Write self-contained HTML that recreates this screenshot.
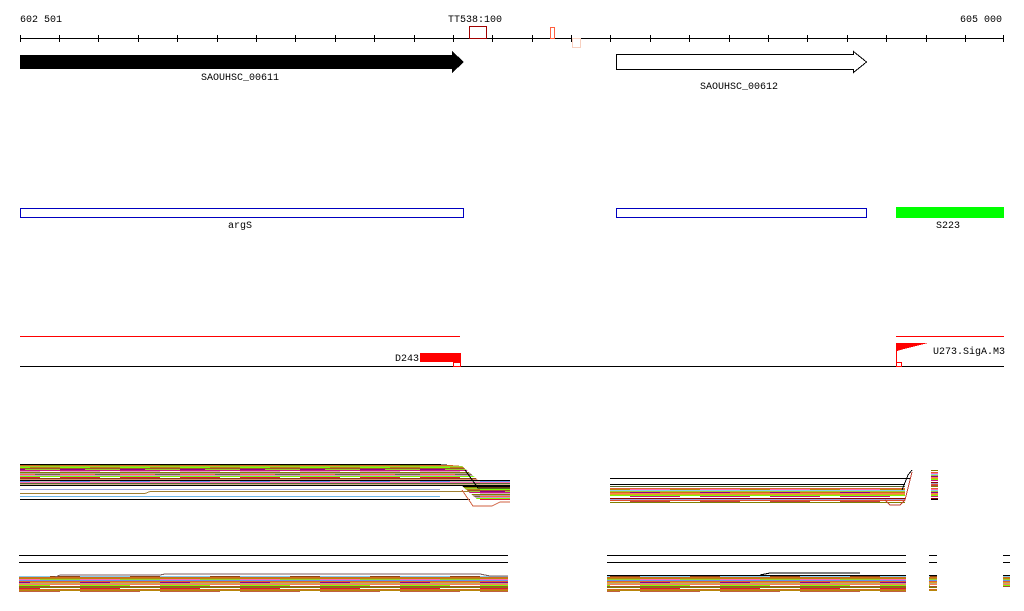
<!DOCTYPE html>
<html><head><meta charset="utf-8"><style>
html,body{margin:0;padding:0;background:#fff;width:1024px;height:611px;overflow:hidden}
svg text{font-family:"Liberation Mono","DejaVu Sans Mono",monospace;font-size:10px;fill:#000}
</style></head><body>
<svg width="1024" height="611" viewBox="0 0 1024 611" xmlns="http://www.w3.org/2000/svg" shape-rendering="crispEdges">
<defs>
<pattern id="s1" x="0" y="464" width="60" height="22" patternUnits="userSpaceOnUse">
<rect width="60" height="22" fill="#fff"/>
<rect y="0" width="60" height="1" fill="#000"/>
<rect y="1" width="40" height="1" fill="#d2691e"/><rect x="40" y="1" width="20" height="1" fill="#8b8b00"/>
<rect y="2" width="60" height="1" fill="#9acd32"/>
<rect y="3" width="30" height="1" fill="#7cfc00"/><rect x="30" y="3" width="30" height="1" fill="#b8860b"/>
<rect y="4" width="60" height="1" fill="#a0522d"/>
<rect y="5" width="25" height="1" fill="#8b008b"/><rect x="25" y="5" width="35" height="1" fill="#9acd32"/>
<rect y="6" width="60" height="1" fill="#c71585"/>
<rect y="7" width="40" height="1" fill="#d8a0c0"/>
<rect y="8" width="60" height="1" fill="#808000"/>
<rect y="9" width="60" height="1" fill="#b0a0a0"/>
<rect y="10" width="35" height="1" fill="#ff6347"/><rect x="35" y="10" width="25" height="1" fill="#806040"/>
<rect y="11" width="60" height="1" fill="#c8a0d0"/>
<rect y="12" width="60" height="1" fill="#7cfc00"/>
<rect y="13" width="40" height="1" fill="#dc143c"/>
<rect y="14" width="60" height="1" fill="#8b4513"/>
<rect y="15" width="60" height="1" fill="#e09070"/>
<rect y="16" width="60" height="1" fill="#000"/>
<rect y="17" width="30" height="1" fill="#6495ed"/><rect x="30" y="17" width="30" height="1" fill="#c0c0c0"/>
<rect y="18" width="60" height="1" fill="#ff69b4"/>
<rect y="19" width="60" height="1" fill="#556b2f"/>
<rect y="20" width="60" height="1" fill="#d2b48c"/>
<rect y="21" width="60" height="1" fill="#000"/>
</pattern>
<pattern id="s2" x="0" y="488" width="70" height="16" patternUnits="userSpaceOnUse">
<rect width="70" height="16" fill="#fff"/>
<rect y="0" width="70" height="1" fill="#e06030"/>
<rect y="1" width="40" height="1" fill="#ff69b4"/><rect x="40" y="1" width="30" height="1" fill="#b8860b"/>
<rect y="2" width="70" height="1" fill="#87ceeb"/>
<rect y="3" width="70" height="1" fill="#9acd32"/>
<rect y="4" width="30" height="1" fill="#8b008b"/><rect x="30" y="4" width="40" height="1" fill="#d2691e"/>
<rect y="5" width="70" height="1" fill="#ff7f50"/>
<rect y="6" width="70" height="1" fill="#daa520"/>
<rect y="7" width="70" height="1" fill="#7cfc00"/>
<rect y="8" width="50" height="1" fill="#c71585"/>
<rect y="9" width="70" height="1" fill="#fff"/>
<rect y="10" width="70" height="1" fill="#8b0000"/>
<rect y="11" width="70" height="1" fill="#a0a0d0"/>
<rect y="12" width="70" height="1" fill="#e05030"/>
<rect y="13" width="40" height="1" fill="#c04040"/>
<rect y="14" width="70" height="1" fill="#808000"/>
<rect y="15" width="70" height="1" fill="#fff"/>
</pattern>
<pattern id="s3" x="0" y="575" width="80" height="17" patternUnits="userSpaceOnUse">
<rect width="80" height="17" fill="#fff"/>
<rect y="0" width="80" height="1" fill="#000"/>
<rect y="1" width="50" height="1" fill="#87ceeb"/><rect x="50" y="1" width="30" height="1" fill="#8b4513"/>
<rect y="2" width="80" height="1" fill="#d2691e"/>
<rect y="3" width="80" height="1" fill="#b8860b"/>
<rect y="4" width="40" height="1" fill="#ff69b4"/><rect x="40" y="4" width="40" height="1" fill="#9acd32"/>
<rect y="5" width="80" height="1" fill="#6495ed"/>
<rect y="6" width="80" height="1" fill="#e06030"/>
<rect y="7" width="30" height="1" fill="#8b008b"/><rect x="30" y="7" width="50" height="1" fill="#daa520"/>
<rect y="8" width="80" height="1" fill="#c0a080"/>
<rect y="9" width="80" height="1" fill="#ff7f50"/>
<rect y="10" width="50" height="1" fill="#7cfc00"/>
<rect y="11" width="80" height="1" fill="#a0522d"/>
<rect y="12" width="80" height="1" fill="#808000"/>
<rect y="13" width="40" height="1" fill="#dc143c"/>
<rect y="14" width="80" height="1" fill="#d2691e"/>
<rect y="15" width="80" height="1" fill="#b8860b"/>
<rect y="16" width="60" height="1" fill="#c06040"/>
</pattern>
</defs>

<text x="20" y="22">602 501</text>
<text x="448" y="22">TT538:100</text>
<text x="960" y="22">605 000</text>
<line x1="20" y1="38.5" x2="1004" y2="38.5" stroke="#000"/>
<g stroke="#000">
<line x1="20.5" y1="35" x2="20.5" y2="42"/><line x1="59.5" y1="35" x2="59.5" y2="42"/><line x1="98.5" y1="35" x2="98.5" y2="42"/><line x1="138.5" y1="35" x2="138.5" y2="42"/><line x1="177.5" y1="35" x2="177.5" y2="42"/><line x1="217.5" y1="35" x2="217.5" y2="42"/><line x1="256.5" y1="35" x2="256.5" y2="42"/><line x1="295.5" y1="35" x2="295.5" y2="42"/><line x1="335.5" y1="35" x2="335.5" y2="42"/><line x1="374.5" y1="35" x2="374.5" y2="42"/><line x1="414.5" y1="35" x2="414.5" y2="42"/><line x1="453.5" y1="35" x2="453.5" y2="42"/><line x1="492.5" y1="35" x2="492.5" y2="42"/><line x1="532.5" y1="35" x2="532.5" y2="42"/><line x1="571.5" y1="35" x2="571.5" y2="42"/><line x1="610.5" y1="35" x2="610.5" y2="42"/><line x1="650.5" y1="35" x2="650.5" y2="42"/><line x1="689.5" y1="35" x2="689.5" y2="42"/><line x1="729.5" y1="35" x2="729.5" y2="42"/><line x1="768.5" y1="35" x2="768.5" y2="42"/><line x1="807.5" y1="35" x2="807.5" y2="42"/><line x1="847.5" y1="35" x2="847.5" y2="42"/><line x1="886.5" y1="35" x2="886.5" y2="42"/><line x1="926.5" y1="35" x2="926.5" y2="42"/><line x1="965.5" y1="35" x2="965.5" y2="42"/><line x1="1003.5" y1="35" x2="1003.5" y2="42"/>
</g>
<rect x="469.5" y="26.5" width="17" height="12" fill="none" stroke="#a00000"/>
<rect x="550.5" y="27.5" width="4" height="11" fill="none" stroke="#ff6040"/>
<rect x="572.5" y="38.5" width="8" height="9" fill="none" stroke="#f8d0c0"/>

<polygon points="20,55 452,55 452,51 464,62 452,73 452,69 20,69" fill="#000"/>
<text x="201" y="80">SAOUHSC_00611</text>
<polygon points="616.5,54.5 853.5,54.5 853.5,51.5 866.5,62 853.5,72.5 853.5,69.5 616.5,69.5" fill="#fff" stroke="#000"/>
<text x="700" y="89">SAOUHSC_00612</text>

<rect x="20.5" y="208.5" width="443" height="9" fill="none" stroke="#0000c0"/>
<text x="228" y="228">argS</text>
<rect x="616.5" y="208.5" width="250" height="9" fill="none" stroke="#0000c0"/>
<rect x="896" y="207" width="108" height="11" fill="#00ff00"/>
<text x="936" y="228">S223</text>

<line x1="20" y1="336.5" x2="460" y2="336.5" stroke="#ff0000"/>
<line x1="896" y1="336.5" x2="1004" y2="336.5" stroke="#ff0000"/>
<line x1="20" y1="366.5" x2="1004" y2="366.5" stroke="#000"/>
<text x="395" y="361">D243</text>
<rect x="420" y="353" width="41" height="9" fill="#ff0000"/>
<rect x="453.5" y="362.5" width="7" height="4" fill="#fff" stroke="#ff0000"/>
<polygon points="896,343 928,343 920,345 912,347 904,349 897,351 896,352" fill="#ff0000"/>
<line x1="896.5" y1="343" x2="896.5" y2="363" stroke="#ff0000"/>
<rect x="896.5" y="362.5" width="5" height="4" fill="#fff" stroke="#ff0000"/>
<text x="933" y="354">U273.SigA.M3</text>

<rect x="20" y="464" width="418" height="22" fill="url(#s1)"/>
<polygon points="438,464 462,466 478,480 510,480 510,500 478,500 462,486 438,486" fill="url(#s1)"/>
<line x1="20" y1="489.5" x2="440" y2="489.5" stroke="#a0a8e0"/>
<polyline points="20,493.5 145,493.5 150,491.5 470,491.5" fill="none" stroke="#a08030"/>
<line x1="20" y1="496.5" x2="440" y2="496.5" stroke="#70b8e8"/>
<line x1="20" y1="499.5" x2="470" y2="499.5" stroke="#000"/>
<polyline points="465,470 478,488 510,488" fill="none" stroke="#000"/>
<polyline points="462,490 473,506 492,506 500,502 510,502" fill="none" stroke="#d06040"/>

<line x1="610" y1="478.5" x2="910" y2="478.5" stroke="#000"/>
<line x1="610" y1="484.5" x2="905" y2="484.5" stroke="#000"/>
<line x1="610" y1="486.5" x2="905" y2="486.5" stroke="#556b2f"/>
<rect x="610" y="488" width="295" height="16" fill="url(#s2)"/>
<polyline points="885,500 890,505 900,505 905,500 912,472" fill="none" stroke="#c04030"/>
<polyline points="902,490 908,475 912,470" fill="none" stroke="#000"/>
<rect x="931" y="470" width="7" height="30" fill="url(#s2)"/>
<line x1="931" y1="499.5" x2="938" y2="499.5" stroke="#000"/>

<line x1="19" y1="555.5" x2="508" y2="555.5" stroke="#000"/>
<line x1="19" y1="562.5" x2="508" y2="562.5" stroke="#000"/>
<line x1="607" y1="555.5" x2="906" y2="555.5" stroke="#000"/>
<line x1="607" y1="562.5" x2="906" y2="562.5" stroke="#000"/>
<line x1="929" y1="555.5" x2="937" y2="555.5" stroke="#000"/>
<line x1="929" y1="562.5" x2="937" y2="562.5" stroke="#000"/>
<line x1="1003" y1="555.5" x2="1010" y2="555.5" stroke="#000"/>
<line x1="1003" y1="562.5" x2="1010" y2="562.5" stroke="#000"/>
<rect x="19" y="576" width="489" height="16" fill="url(#s3)"/>
<polyline points="55,577 60,575 160,575 165,574 480,574 490,576 508,576" fill="none" stroke="#806060"/>
<rect x="607" y="575" width="299" height="17" fill="url(#s3)"/>
<polyline points="760,575 770,573 860,573" fill="none" stroke="#000"/>
<rect x="929" y="575" width="8" height="16" fill="url(#s3)"/>
<rect x="1003" y="575" width="7" height="12" fill="url(#s3)"/>
</svg>
</body></html>
